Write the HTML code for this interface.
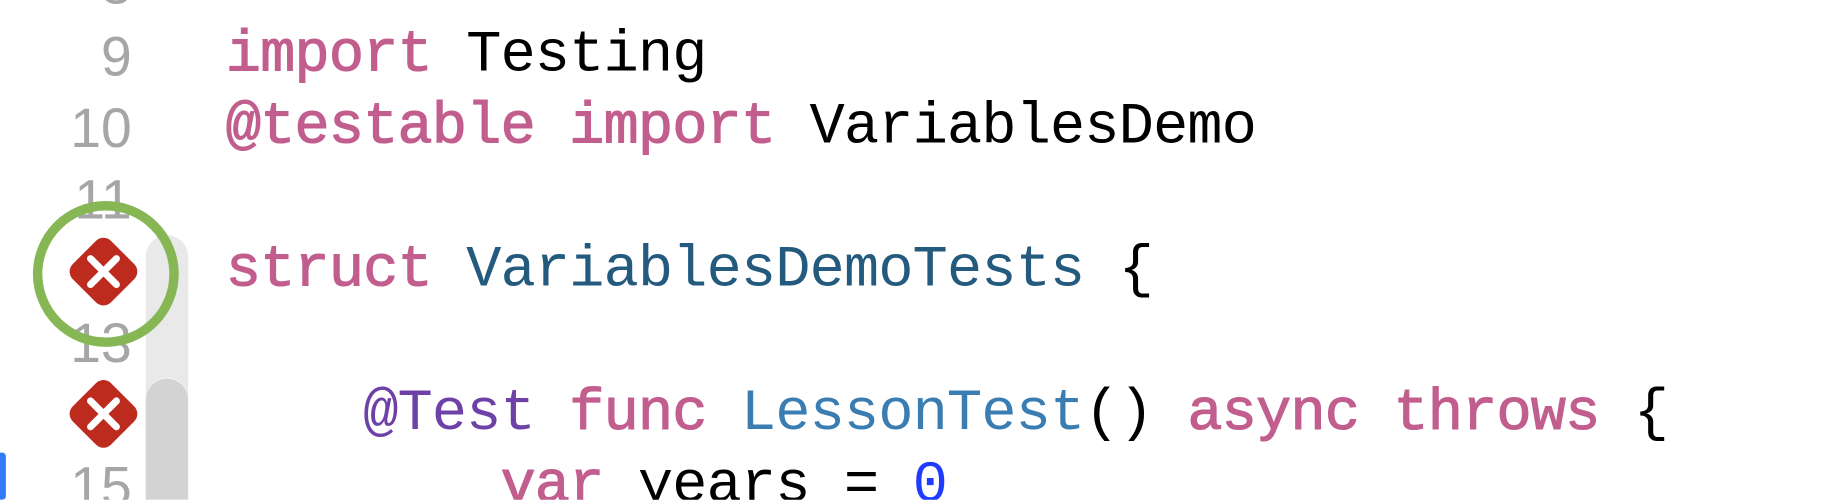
<!DOCTYPE html>
<html><head><meta charset="utf-8"><style>
html,body{margin:0;padding:0;background:#fff;width:1846px;height:500px;overflow:hidden;position:relative}
#w{position:absolute;left:0;top:0;width:1570px;height:425px;overflow:hidden;transform:scale(1.1758);transform-origin:0 0}
.ln{position:absolute;left:0;width:112px;text-align:right;font-family:"Liberation Sans",sans-serif;font-size:47px;color:#a6a6a6;line-height:61px;height:61px}
.c{position:absolute;left:192px;font-family:"Liberation Mono",monospace;font-size:50px;letter-spacing:-0.8px;line-height:61px;height:61px;white-space:pre;color:#000}
.k{color:#c25e8e;-webkit-text-stroke:0.9px #c25e8e}
.t{color:#235a7e}
.f{color:#3a7db2}
.a{color:#6d41a8}
.n{color:#1f3bff}
</style></head><body><div id="w">
<div style="position:absolute;left:124px;top:200px;width:36px;height:225px;background:#e9e9e9;border-radius:18px 18px 0 0"></div>
<div style="position:absolute;left:124px;top:322px;width:36px;height:103px;background:#d3d3d3;border-radius:18px 18px 0 0;box-shadow:0 -1px 0 #f4f4f4"></div>
<div style="position:absolute;left:0;top:385px;width:5px;height:40px;background:#2f7cf6;border-radius:0 3px 3px 0"></div>

<div class="ln" style="top:-44px">8</div>
<div class="ln" style="top:17px">9</div>
<div class="ln" style="top:78px">10</div>
<div class="ln" style="top:139px">11</div>
<div class="ln" style="top:261px">13</div>
<div class="ln" style="top:383px">15</div>

<svg style="position:absolute;left:0;top:0" width="200" height="425">
<g transform="translate(88,231)"><rect x="-23" y="-23" width="46" height="46" rx="9" transform="rotate(45)" fill="#bd2a1e"/><path d="M-11,-11L11,11M11,-11L-11,11" stroke="#fff" stroke-width="6" stroke-linecap="round"/></g>
<g transform="translate(88,352)"><rect x="-23" y="-23" width="46" height="46" rx="9" transform="rotate(45)" fill="#bd2a1e"/><path d="M-11,-11L11,11M11,-11L-11,11" stroke="#fff" stroke-width="6" stroke-linecap="round"/></g>
<circle cx="90" cy="233" r="58" fill="none" stroke="#86b754" stroke-width="8"/>
</svg>

<div class="c" style="top:17px"><span class="k">import</span> Testing</div>
<div class="c" style="top:78px"><span class="k">@testable</span> <span class="k">import</span> VariablesDemo</div>
<div class="c" style="top:200px"><span class="k">struct</span> <span class="t">VariablesDemoTests</span> {</div>
<div class="c" style="top:322px">    <span class="a">@Test</span> <span class="k">func</span> <span class="f">LessonTest</span>() <span class="k">async</span> <span class="k">throws</span> {</div>
<div class="c" style="top:383px">        <span class="k">var</span> years = <span class="n">0</span></div>
</div></body></html>
